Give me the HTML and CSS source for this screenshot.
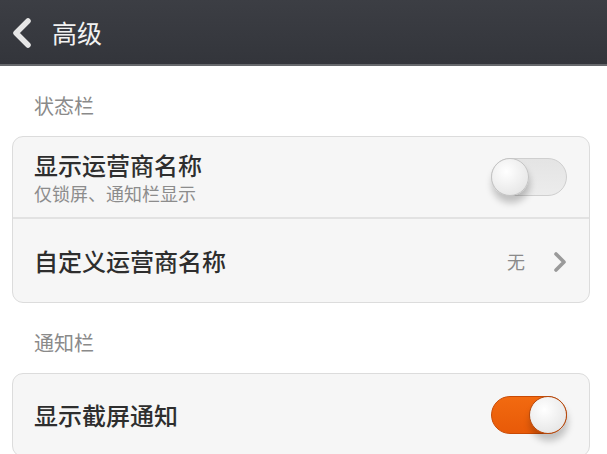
FILE: index.html
```html
<!DOCTYPE html>
<html lang="zh-CN">
<head>
  <meta charset="UTF-8">
  <meta name="viewport" content="width=device-width, initial-scale=1.0">
  <title>高级</title>
  <link rel="stylesheet" href="styles.css">
</head>
<body>
  <div class="topbar">
    <svg class="back" width="24" height="30" viewBox="0 0 24 30"><path d="M18 3 L6 15 L18 27" fill="none" stroke="#e6e6e6" stroke-width="5.5" stroke-linecap="round" stroke-linejoin="round"/></svg>
    <h1>高级</h1>
  </div>

  <div class="section">状态栏</div>
  <div class="card">
    <div class="row first">
      <div class="text">
        <div class="title">显示运营商名称</div>
        <div class="sub">仅锁屏、通知栏显示</div>
      </div>
      <div class="switch"><span class="knob"></span></div>
    </div>
    <div class="row second">
      <div class="title">自定义运营商名称</div>
      <div class="value">无</div>
      <svg class="more" width="14" height="22" viewBox="0 0 14 22"><path d="M3 3 L11 11 L3 19" fill="none" stroke="#9a9a9a" stroke-width="3.6" stroke-linecap="round" stroke-linejoin="round"/></svg>
    </div>
  </div>

  <div class="section">通知栏</div>
  <div class="card">
    <div class="row single">
      <div class="title">显示截屏通知</div>
      <div class="switch on"><span class="knob"></span></div>
    </div>
  </div>
</body>
</html>
```

FILE: styles.css
```css
body { margin: 0; background: #fff; font-family: "Noto Sans CJK SC", "Noto Sans", sans-serif; overflow: hidden; }
.topbar { height: 64px; background: linear-gradient(#3c3e44, #33353b); border-bottom: 2px solid #66686c; display: flex; align-items: center; padding-left: 10px; }
.back { margin-top: 2px; }
.topbar h1 { margin: 0 0 0 18px; font-size: 25px; font-weight: normal; color: #f2f2f2; line-height: 30px; }
.section { height: 70px; box-sizing: border-box; padding: 27px 0 0 34px; font-size: 20px; line-height: 26px; color: #8a8a8a; }
.card { margin: 0 17px 0 12px; background: #f6f6f6; border: 1px solid #dcdcdc; border-radius: 11px; }
.row { display: flex; align-items: center; padding: 0 22px 0 21px; }
.row.first { height: 80px; border-bottom: 2px solid #e2e2e2; }
.row.second { height: 83px; }
.row.single { height: 82px; }
.text { flex: 1; padding-top: 1px; }
.title { flex: 1; font-size: 24px; line-height: 28px; color: #2e2e2e; font-weight: 500; }
.sub { font-size: 18px; line-height: 22px; color: #8c8c8c; margin-top: 3px; }
.value { font-size: 18px; color: #8a8a8a; margin-right: 28px; }
.more { margin-top: 2px; }
.switch { position: relative; width: 76px; height: 38px; box-sizing: border-box; border-radius: 19px; background: linear-gradient(#e4e4e4, #ececec); border: 1px solid #cfcfcf; }
.switch .knob { position: absolute; left: -1px; top: -1px; width: 38px; height: 38px; box-sizing: border-box; border-radius: 50%; background: radial-gradient(circle at 40% 35%, #ffffff, #e9e9e9 70%, #dcdcdc); border: 1px solid #c4c4c4; box-shadow: 1px 7px 7px rgba(0, 0, 0, 0.22); }
.switch.on { background: linear-gradient(#f26a10, #e85a08); border-color: #c94a04; }
.switch.on .knob { left: auto; right: -1px; border-color: #b44a10; }
```
